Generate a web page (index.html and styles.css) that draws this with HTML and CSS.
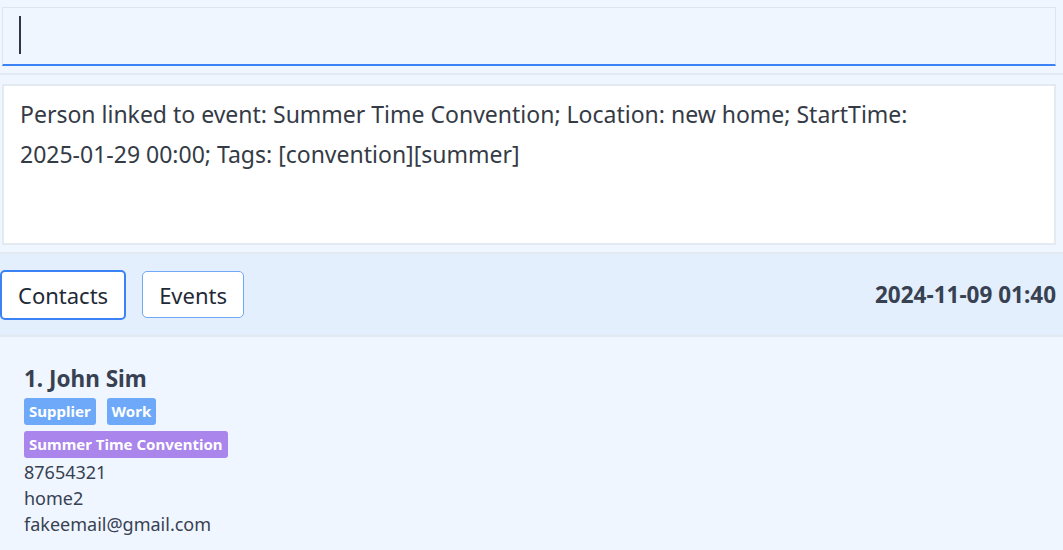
FILE: index.html
```html
<!DOCTYPE html>
<html>
<head>
<meta charset="utf-8">
<link rel="stylesheet" href="styles.css">
</head>
<body>
<div class="app">
  <section class="command-area">
    <div class="command-box"><span class="caret"></span></div>
  </section>
  <section class="result-area">
    <div class="result-box">Person linked to event: Summer Time Convention; Location: new home; StartTime: 2025-01-29 00:00; Tags: [convention][summer]</div>
  </section>
  <section class="toolbar">
    <div class="tabs">
      <button class="tab tab-active">Contacts</button>
      <button class="tab">Events</button>
    </div>
    <div class="clock">2024-11-09 01:40</div>
  </section>
  <section class="list">
    <div class="card">
      <div class="name">1. John Sim</div>
      <div class="tags">
        <span class="tag">Supplier</span>
        <span class="tag">Work</span>
      </div>
      <div class="tags tags-last">
        <span class="tag tag-event">Summer Time Convention</span>
      </div>
      <div class="field">87654321</div>
      <div class="field">home2</div>
      <div class="field">fakeemail@gmail.com</div>
    </div>
  </section>
</div>
</body>
</html>
```

FILE: styles.css
```css
* { box-sizing: border-box; }
html, body {
  margin: 0;
  padding: 0;
  background: #eff6ff;
  font-family: "Noto Sans", "Open Sans", sans-serif;
  color: #374151;
  overflow: hidden;
}
.app {
  width: 1063px;
  height: 550px;
  display: flex;
  flex-direction: column;
}
.command-area {
  padding: 7px 7px 7px 2px;
  border-bottom: 2px solid #e2e9f1;
}
.command-box {
  height: 59px;
  border: 1px solid #dce5ee;
  border-bottom: 2px solid #3b82f6;
  background: #eff6ff;
  display: flex;
  align-items: center;
  padding-left: 16px;
}
.caret {
  display: block;
  width: 2px;
  height: 38px;
  background: #2d3748;
  margin-top: -2px;
}
.result-area {
  padding: 9px 7px 7px 2px;
  border-bottom: 2px solid #e2e9f1;
}
.result-box {
  height: 161px;
  background: #ffffff;
  border: 2px solid #e3eaf2;
  padding: 8px 100px 0 16px;
  font-size: 23px;
  line-height: 40px;
  color: #343b46;
}
.toolbar {
  height: 83px;
  background: #e3effd;
  border-bottom: 2px solid #e2e9f1;
  display: flex;
  align-items: center;
  justify-content: space-between;
  padding: 0 7px 0 0;
}
.tabs {
  display: flex;
  gap: 16px;
  align-items: center;
}
.tab {
  font-family: inherit;
  font-size: 22px;
  color: #1f2937;
  background: #ffffff;
  border: 1.5px solid #72a9f6;
  border-radius: 5px;
  height: 47px;
  padding: 0 16px;
  cursor: pointer;
}
.tab-active {
  border: 2px solid #3b82f6;
  height: 50px;
}
.clock {
  font-size: 22.5px;
  font-weight: 700;
  color: #374151;
}
.list {
  flex: 1;
  background: #eff6ff;
  padding: 27px 24px 0 24px;
}
.name {
  font-size: 22.5px;
  font-weight: 700;
  line-height: 30px;
  color: #374151;
  margin-bottom: 4px;
}
.tags {
  display: flex;
  gap: 11px;
  margin-bottom: 6px;
}
.tags-last {
  margin-bottom: 1px;
}
.tag {
  display: inline-block;
  background: #6ea9f9;
  color: #ffffff;
  font-size: 15px;
  font-weight: 700;
  line-height: 27px;
  padding: 0 5px;
  border-radius: 3px;
}
.tag-event {
  background: #a985ec;
}
.field {
  font-size: 18px;
  line-height: 26px;
  color: #374151;
}
```
